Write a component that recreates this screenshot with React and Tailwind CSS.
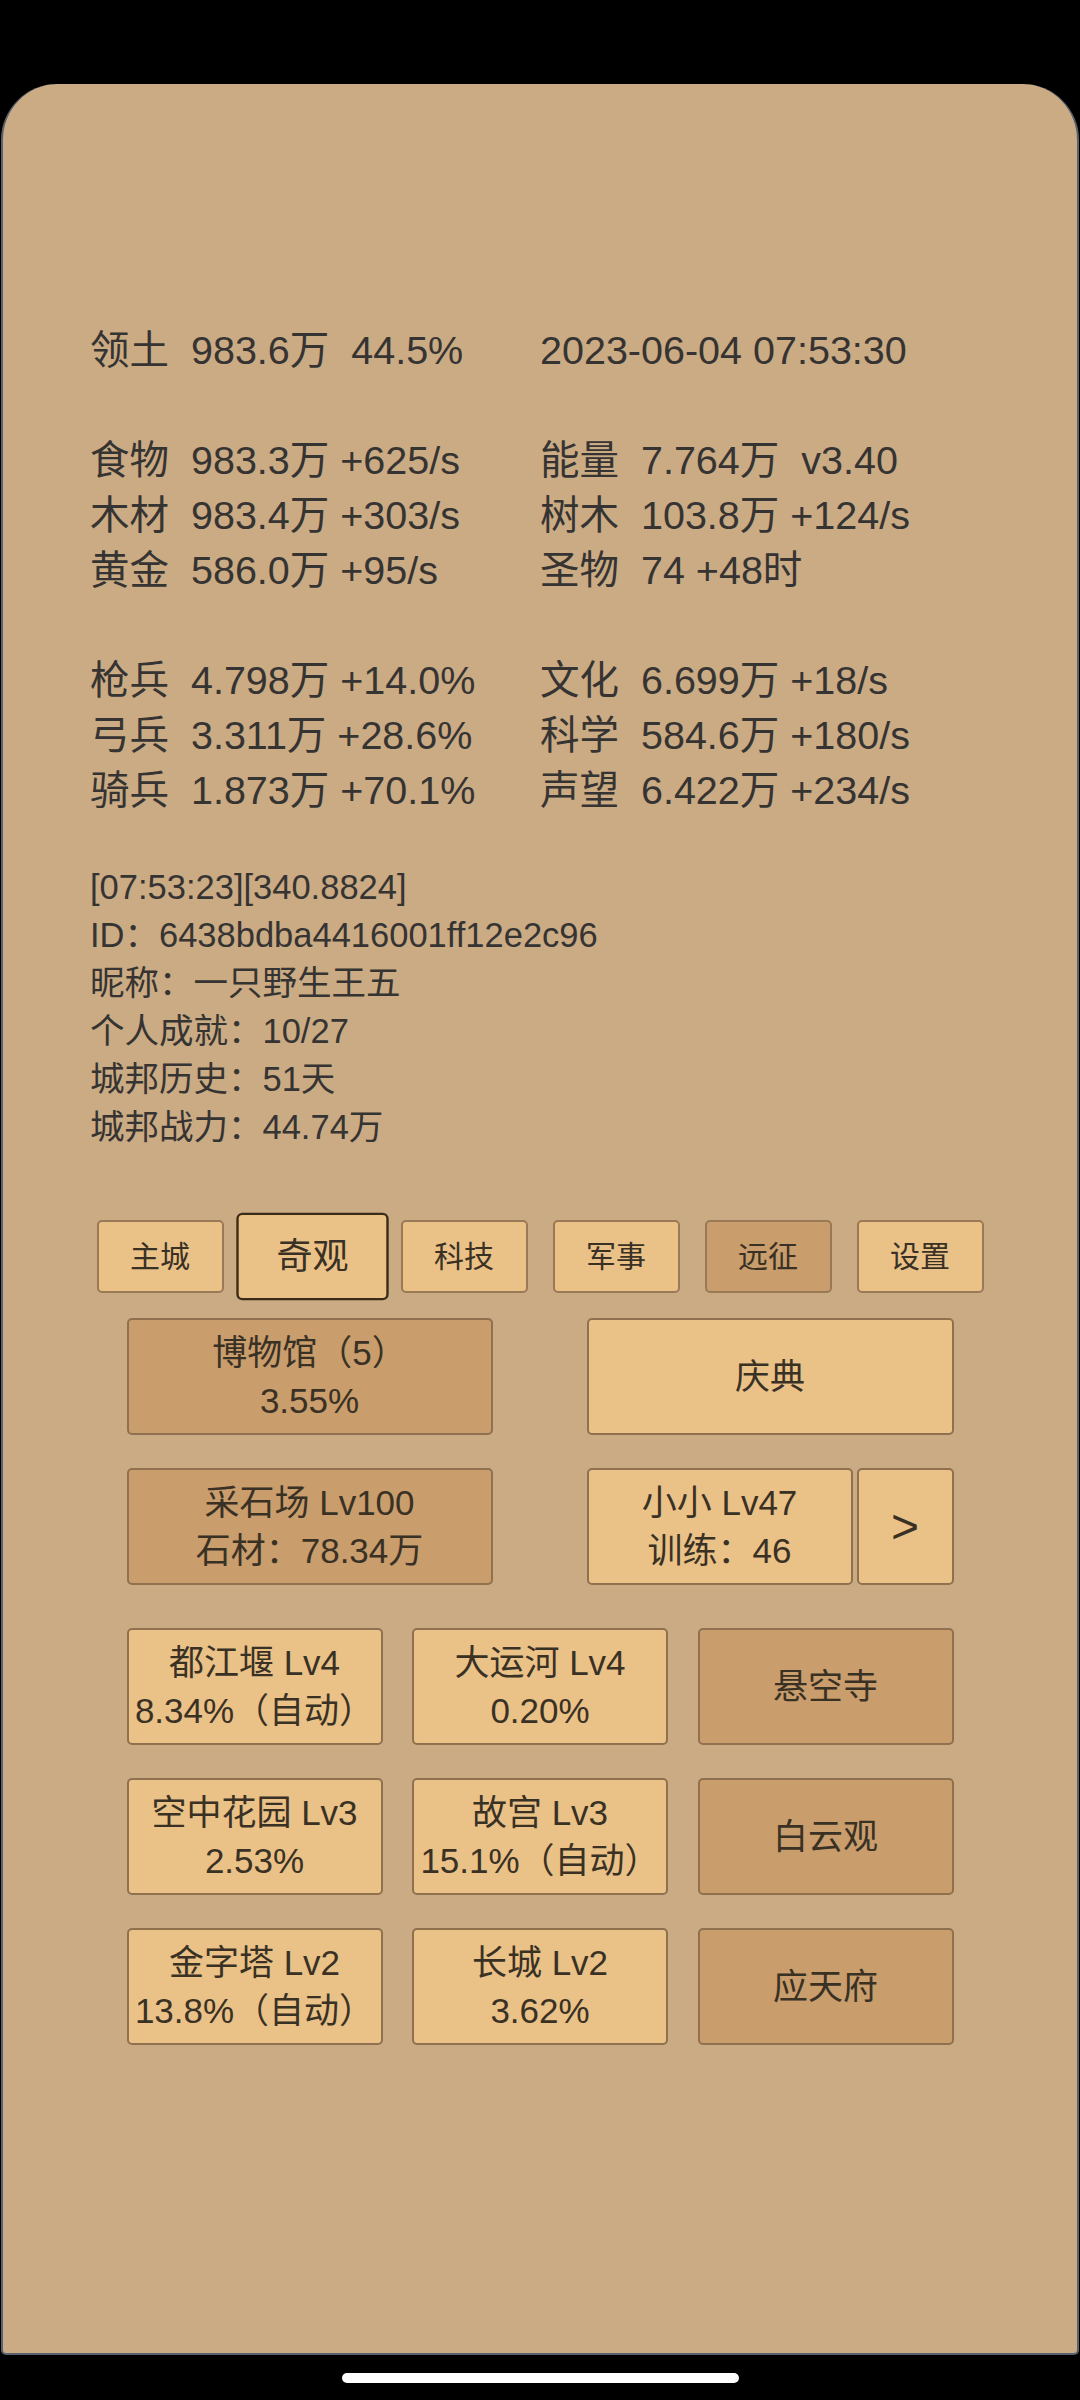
import React from 'react';

const STATS = [
  ['领土  983.6万  44.5%', '2023-06-04 07:53:30'],
  null,
  ['食物  983.3万 +625/s', '能量  7.764万  v3.40'],
  ['木材  983.4万 +303/s', '树木  103.8万 +124/s'],
  ['黄金  586.0万 +95/s', '圣物  74 +48时'],
  null,
  ['枪兵  4.798万 +14.0%', '文化  6.699万 +18/s'],
  ['弓兵  3.311万 +28.6%', '科学  584.6万 +180/s'],
  ['骑兵  1.873万 +70.1%', '声望  6.422万 +234/s'],
];

const INFO = [
  '[07:53:23][340.8824]',
  'ID：6438bdba4416001ff12e2c96',
  '昵称：一只野生王五',
  '个人成就：10/27',
  '城邦历史：51天',
  '城邦战力：44.74万',
];

const TABS = [
  { name: '主城' },
  { name: '奇观', active: true },
  { name: '科技' },
  { name: '军事' },
  { name: '远征', dark: true },
  { name: '设置' },
];

const WONDERS = [
  [
    { lines: ['都江堰 Lv4', '8.34%（自动）'] },
    { lines: ['大运河 Lv4', '0.20%'] },
    { lines: ['悬空寺'], dark: true },
  ],
  [
    { lines: ['空中花园 Lv3', '2.53%'] },
    { lines: ['故宫 Lv3', '15.1%（自动）'] },
    { lines: ['白云观'], dark: true },
  ],
  [
    { lines: ['金字塔 Lv2', '13.8%（自动）'] },
    { lines: ['长城 Lv2', '3.62%'] },
    { lines: ['应天府'], dark: true },
  ],
];

function Box({ lines, dark, className = '' }) {
  return (
    <div
      className={`h-[117px] flex flex-col items-center justify-center rounded-[5px] border-2 border-[#8f7150] text-[35px] leading-[48px] text-[#3a3125] whitespace-nowrap ${dark ? 'bg-[#c99d6c]' : 'bg-[#eac187]'} ${className}`}
    >
      {lines.map((l) => (
        <div key={l}>{l}</div>
      ))}
    </div>
  );
}

export default function App() {
  return (
    <div className="w-[1080px] h-[2400px] bg-black pt-[84px] font-['Liberation_Sans','Noto_Sans_CJK_SC',sans-serif]">
      <div className="ml-[1px] w-[1078px] h-[2271px] bg-[#cbab83] rounded-t-[56px] rounded-b-[5px] border-x-2 border-b-2 border-[#59626f] text-[#363433]">
        <div className="pt-[239px] pl-[87px] text-[39.5px]">
          {STATS.map((row, i) =>
            row ? (
              <div key={i} className="h-[55px] leading-[55px] flex whitespace-pre">
                <div className="w-[450px]">{row[0]}</div>
                <div>{row[1]}</div>
              </div>
            ) : (
              <div key={i} className="h-[55px]" />
            )
          )}
        </div>

        <div className="mt-[45px] pl-[87px] text-[34.5px]">
          {INFO.map((l) => (
            <div key={l} className="h-[48px] leading-[48px] whitespace-pre">{l}</div>
          ))}
        </div>

        <div className="mt-[69px] flex justify-center gap-[25px]">
          {TABS.map((t) => (
            <div
              key={t.name}
              className={`w-[127px] h-[73px] flex items-center justify-center rounded-[5px] border-2 text-[30px] text-[#3a3125] ${t.dark ? 'bg-[#c99d6c]' : 'bg-[#eac187]'} ${t.active ? 'scale-120 border-[#3b2b19]' : 'border-[#9a7a56]'}`}
            >
              {t.name}
            </div>
          ))}
        </div>

        <div className="w-[827px] mx-auto mt-[25px] flex flex-col">
          <div className="flex justify-between">
            <Box lines={['博物馆（5）', '3.55%']} dark className="w-[366px]" />
            <Box lines={['庆典']} className="w-[367px]" />
          </div>
          <div className="flex justify-between mt-[33px]">
            <Box lines={['采石场 Lv100', '石材：78.34万']} dark className="w-[366px]" />
            <div className="flex gap-[4px]">
              <Box lines={['小小 Lv47', '训练：46']} className="w-[266px]" />
              <Box lines={['>']} className="w-[97px] text-[48px]" />
            </div>
          </div>
          {WONDERS.map((row, i) => (
            <div key={i} className={`flex justify-between ${i === 0 ? 'mt-[43px]' : 'mt-[33px]'}`}>
              {row.map((w) => (
                <Box key={w.lines[0]} lines={w.lines} dark={w.dark} className="w-[256px]" />
              ))}
            </div>
          ))}
        </div>
      </div>
      <div className="mx-auto mt-[18px] w-[397px] h-[10px] rounded-full bg-white" />
    </div>
  );
}
